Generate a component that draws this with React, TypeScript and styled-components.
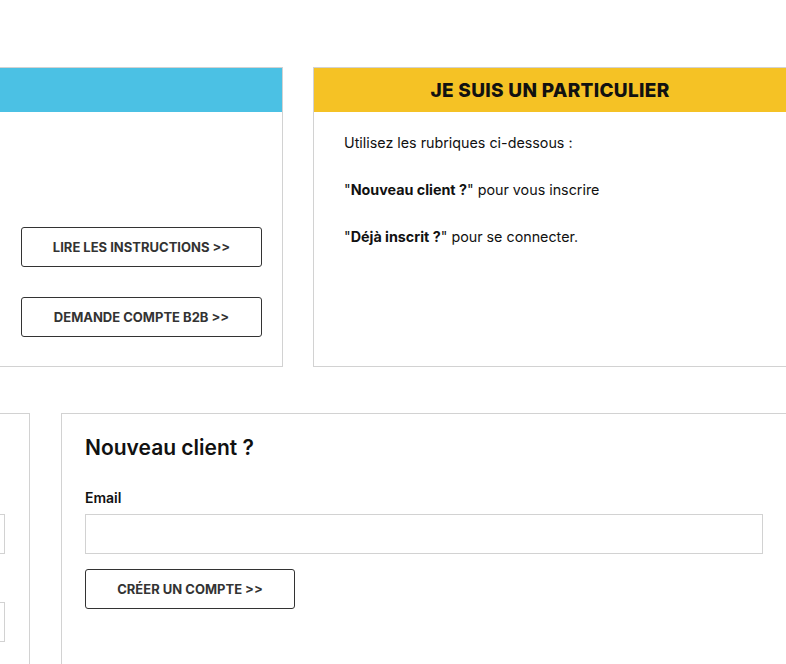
import styled, { createGlobalStyle } from "styled-components";

const GlobalStyle = createGlobalStyle`
    html, body {
        margin: 0;
        padding: 0;
        background: #fff;
        overflow: hidden;
    }
    body {
        font-family: Inter, "Noto Sans", sans-serif;
        color: #111;
    }
`;

const Page = styled.div`
    width: 979px;
    margin-left: -191px;
    padding-top: 67px;
    display: flex;
    flex-direction: column;
    gap: 46px;
`;

const Row = styled.div<{ $cols: string; $gap: number }>`
    display: grid;
    grid-template-columns: ${(p) => p.$cols};
    column-gap: ${(p) => p.$gap}px;
`;

const Card = styled.div`
    border: 1px solid #d2d2d2;
    background: #fff;
    display: flex;
    flex-direction: column;
    min-height: 298px;
`;

const CardHeader = styled.div<{ $bg: string }>`
    height: 44px;
    background: ${(p) => p.$bg};
    display: flex;
    align-items: center;
    justify-content: center;
    font-size: 19px;
    font-weight: 800;
    letter-spacing: 0.3px;
    color: #111;
    text-transform: uppercase;
`;

const ButtonStack = styled.div`
    display: flex;
    flex-direction: column;
    align-items: flex-end;
    gap: 30px;
    padding: 115px 20px 29px;
`;

const OutlineButton = styled.button<{ $width: number }>`
    width: ${(p) => p.$width}px;
    height: 40px;
    background: #fff;
    border: 1px solid #333;
    border-radius: 3px;
    font-family: Inter, "Noto Sans", sans-serif;
    font-size: 13px;
    font-weight: 700;
    color: #333;
    text-transform: uppercase;
    cursor: pointer;
`;

const CardText = styled.div`
    padding: 20px 30px;
    font-size: 14.3px;
    line-height: 21px;
    color: #111;

    p {
        margin: 0 0 26px;
    }
    b {
        font-weight: 700;
    }
`;

const FormCard = styled.div`
    box-sizing: border-box;
    border: 1px solid #d2d2d2;
    border-bottom: none;
    padding: 20px 24px 0 23px;
    height: 251px;
    display: flex;
    flex-direction: column;
`;

const FormTitle = styled.h2`
    margin: 0 0 26px;
    font-size: 21px;
    font-weight: 600;
    line-height: 28px;
    color: #111;
`;

const Label = styled.label`
    font-size: 14px;
    font-weight: 600;
    line-height: 20px;
    margin-bottom: 6px;
    color: #111;
`;

const Input = styled.input<{ $mb: number }>`
    height: 40px;
    box-sizing: border-box;
    border: 1px solid #d2d2d2;
    border-radius: 0;
    margin: 0 0 ${(p) => p.$mb}px;
    padding: 0 10px;
    font-size: 14px;
`;

const LeftFormCard = styled(FormCard)`
    padding-top: 100px;
`;

export default function App() {
    return (
        <>
            <GlobalStyle />
            <Page>
                <Row $cols="474px 474px" $gap={30}>
                    <Card>
                        <CardHeader $bg="#4bc1e4" />
                        <ButtonStack>
                            <OutlineButton $width={241}>Lire les instructions &gt;&gt;</OutlineButton>
                            <OutlineButton $width={241}>Demande compte B2B &gt;&gt;</OutlineButton>
                        </ButtonStack>
                    </Card>
                    <Card>
                        <CardHeader $bg="#f5c225">Je suis un particulier</CardHeader>
                        <CardText>
                            <p>Utilisez les rubriques ci-dessous :</p>
                            <p>"<b>Nouveau client ?</b>" pour vous inscrire</p>
                            <p>"<b>Déjà inscrit ?</b>" pour se connecter.</p>
                        </CardText>
                    </Card>
                </Row>
                <Row $cols="221px 727px" $gap={31}>
                    <LeftFormCard>
                        <Input $mb={48} type="email" />
                        <Input $mb={0} type="password" />
                    </LeftFormCard>
                    <FormCard>
                        <FormTitle>Nouveau client ?</FormTitle>
                        <Label>Email</Label>
                        <Input $mb={15} type="email" />
                        <OutlineButton $width={210}>Créer un compte &gt;&gt;</OutlineButton>
                    </FormCard>
                </Row>
            </Page>
        </>
    );
}
